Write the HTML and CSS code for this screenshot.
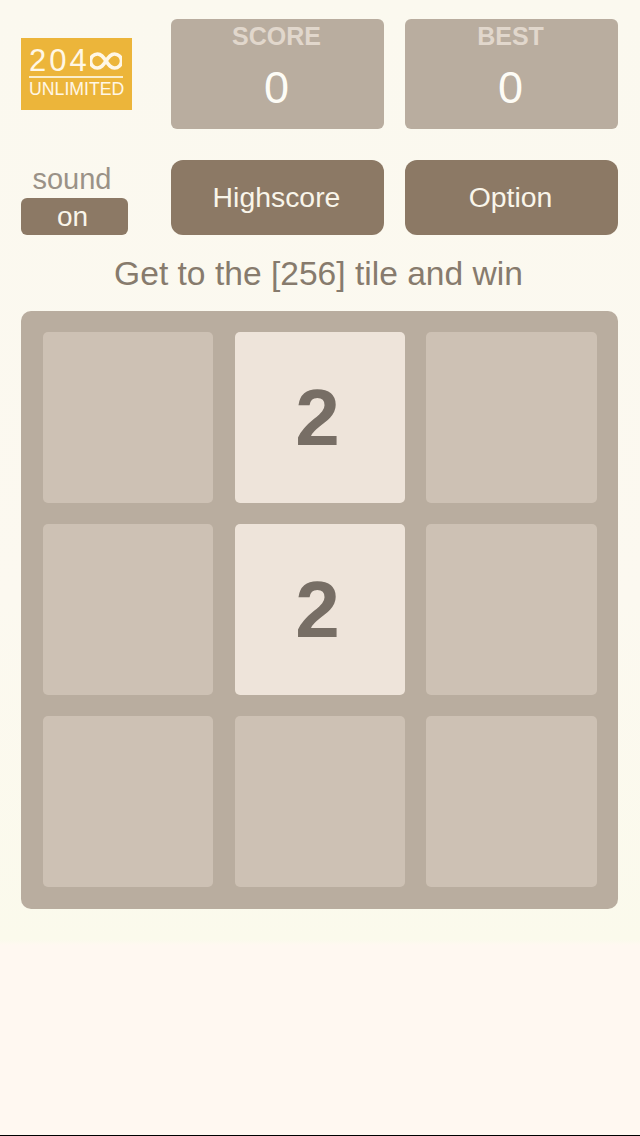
FILE: index.html
```html
<!DOCTYPE html>
<html lang="en">
<head>
<meta charset="utf-8">
<title>2048 Unlimited</title>
<link rel="stylesheet" href="styles.css">
</head>
<body>
<main class="page">
  <section class="controls">
    <div class="logo">
      <div class="logo-top">
        <span class="logo-num">204</span>
        <svg class="logo-inf" viewBox="0 0 32 18" aria-hidden="true"><path d="M16 9C13 4.500 11 2 7.500 2a7 7 0 0 0 0 14C11 16 13 13.500 16 9s5-7 8.500-7a7 7 0 0 1 0 14C21 16 19 13.500 16 9z"/></svg>
      </div>
      <div class="logo-sub">UNLIMITED</div>
    </div>
    <div class="stat"><div class="stat-label">SCORE</div><div class="stat-value">0</div></div>
    <div class="stat"><div class="stat-label">BEST</div><div class="stat-value">0</div></div>
    <div class="sound">
      <div class="sound-label">sound</div>
      <div class="sound-btn">on</div>
    </div>
    <div class="btn">Highscore</div>
    <div class="btn">Option</div>
  </section>
  <h1 class="goal">Get to the [256] tile and win</h1>
  <section class="board">
    <div class="tile"></div>
    <div class="tile tile-2">2</div>
    <div class="tile"></div>
    <div class="tile"></div>
    <div class="tile tile-2">2</div>
    <div class="tile"></div>
    <div class="tile"></div>
    <div class="tile"></div>
    <div class="tile"></div>
  </section>
  <div class="spacer"></div>
  <div class="edge"></div>
</main>
</body>
</html>
```
FILE: styles.css
```css
* { box-sizing: border-box; }
html, body { margin: 0; padding: 0; height: 100%; }
body {
  font-family: "Liberation Sans", Arial, sans-serif;
  background: linear-gradient(to bottom, #fbf9ef 0, #fcf9f0 600px, #fbfaec 940px, #fff8f1 945px, #fff8f1 100%);
}
.page {
  display: flex;
  flex-direction: column;
  height: 1136px;
  overflow: hidden;
}
.controls {
  display: grid;
  grid-template-columns: 129px 213px 213px;
  grid-template-rows: 110px 75px;
  column-gap: 21px;
  row-gap: 31px;
  padding: 19px 0 0 21px;
}
.logo {
  align-self: center;
  width: 111px;
  height: 72px;
  background: #ecb53a;
  color: #fff7e6;
  padding: 8px 9px 0 8px;
}
.logo-top {
  display: flex;
  align-items: center;
  height: 32px;
  padding-bottom: 1px;
  border-bottom: 2px solid #fbeecb;
  white-space: nowrap;
}
.logo-num {
  font-size: 31px;
  line-height: 30px;
  letter-spacing: 3px;
}
.logo-inf {
  width: 32px;
  height: 18px;
  flex: none;
  fill: none;
  stroke: #fff7e6;
  stroke-width: 3.6;
}
.logo-sub {
  font-size: 17.7px;
  line-height: 22px;
  white-space: nowrap;
}
.stat {
  background: #b9ad9f;
  border-radius: 6px;
  text-align: center;
  padding: 2px 2px 0 0;
}
.stat-label {
  font-size: 25px;
  line-height: 30px;
  font-weight: 700;
  color: #e1d7cc;
}
.stat-value {
  font-size: 45px;
  line-height: 52px;
  margin-top: 11px;
  color: #fdfcf6;
}
.sound {
  display: flex;
  flex-direction: column;
  align-items: flex-start;
  justify-content: flex-end;
}
.sound-label {
  width: 102px;
  text-align: center;
  font-size: 29px;
  line-height: 38px;
  color: #9a9287;
}
.sound-btn {
  width: 107px;
  height: 37px;
  line-height: 37px;
  border-radius: 6px;
  background: #8c7965;
  color: #f9f5ea;
  font-size: 28px;
  text-align: center;
  padding-right: 4px;
}
.btn {
  border-radius: 12px;
  background: #8c7965;
  color: #f9f5ea;
  font-size: 28.4px;
  line-height: 75px;
  text-align: center;
  padding-right: 2px;
}
.goal {
  margin: 18px 3px 0 0;
  font-size: 33.6px;
  line-height: 42px;
  font-weight: 400;
  color: #877b6d;
  text-align: center;
}
.board {
  display: grid;
  grid-template-columns: 170px 170px 171px;
  grid-template-rows: repeat(3, 171px);
  column-gap: 21.5px;
  row-gap: 21px;
  width: 597px;
  height: 598px;
  margin: 16px 0 0 21px;
  padding: 21px 21px 21px 22px;
  border-radius: 10px;
  background: #b9ad9f;
}
.tile {
  border-radius: 5px;
  background: #cdc1b4;
  display: flex;
  align-items: center;
  justify-content: center;
}
.tile-2 {
  background: #eee4da;
  color: #776e65;
  font-size: 80px;
  font-weight: 700;
  padding-right: 4px;
}
.spacer { flex: 1; }
.edge { height: 1px; background: #000; }
```
